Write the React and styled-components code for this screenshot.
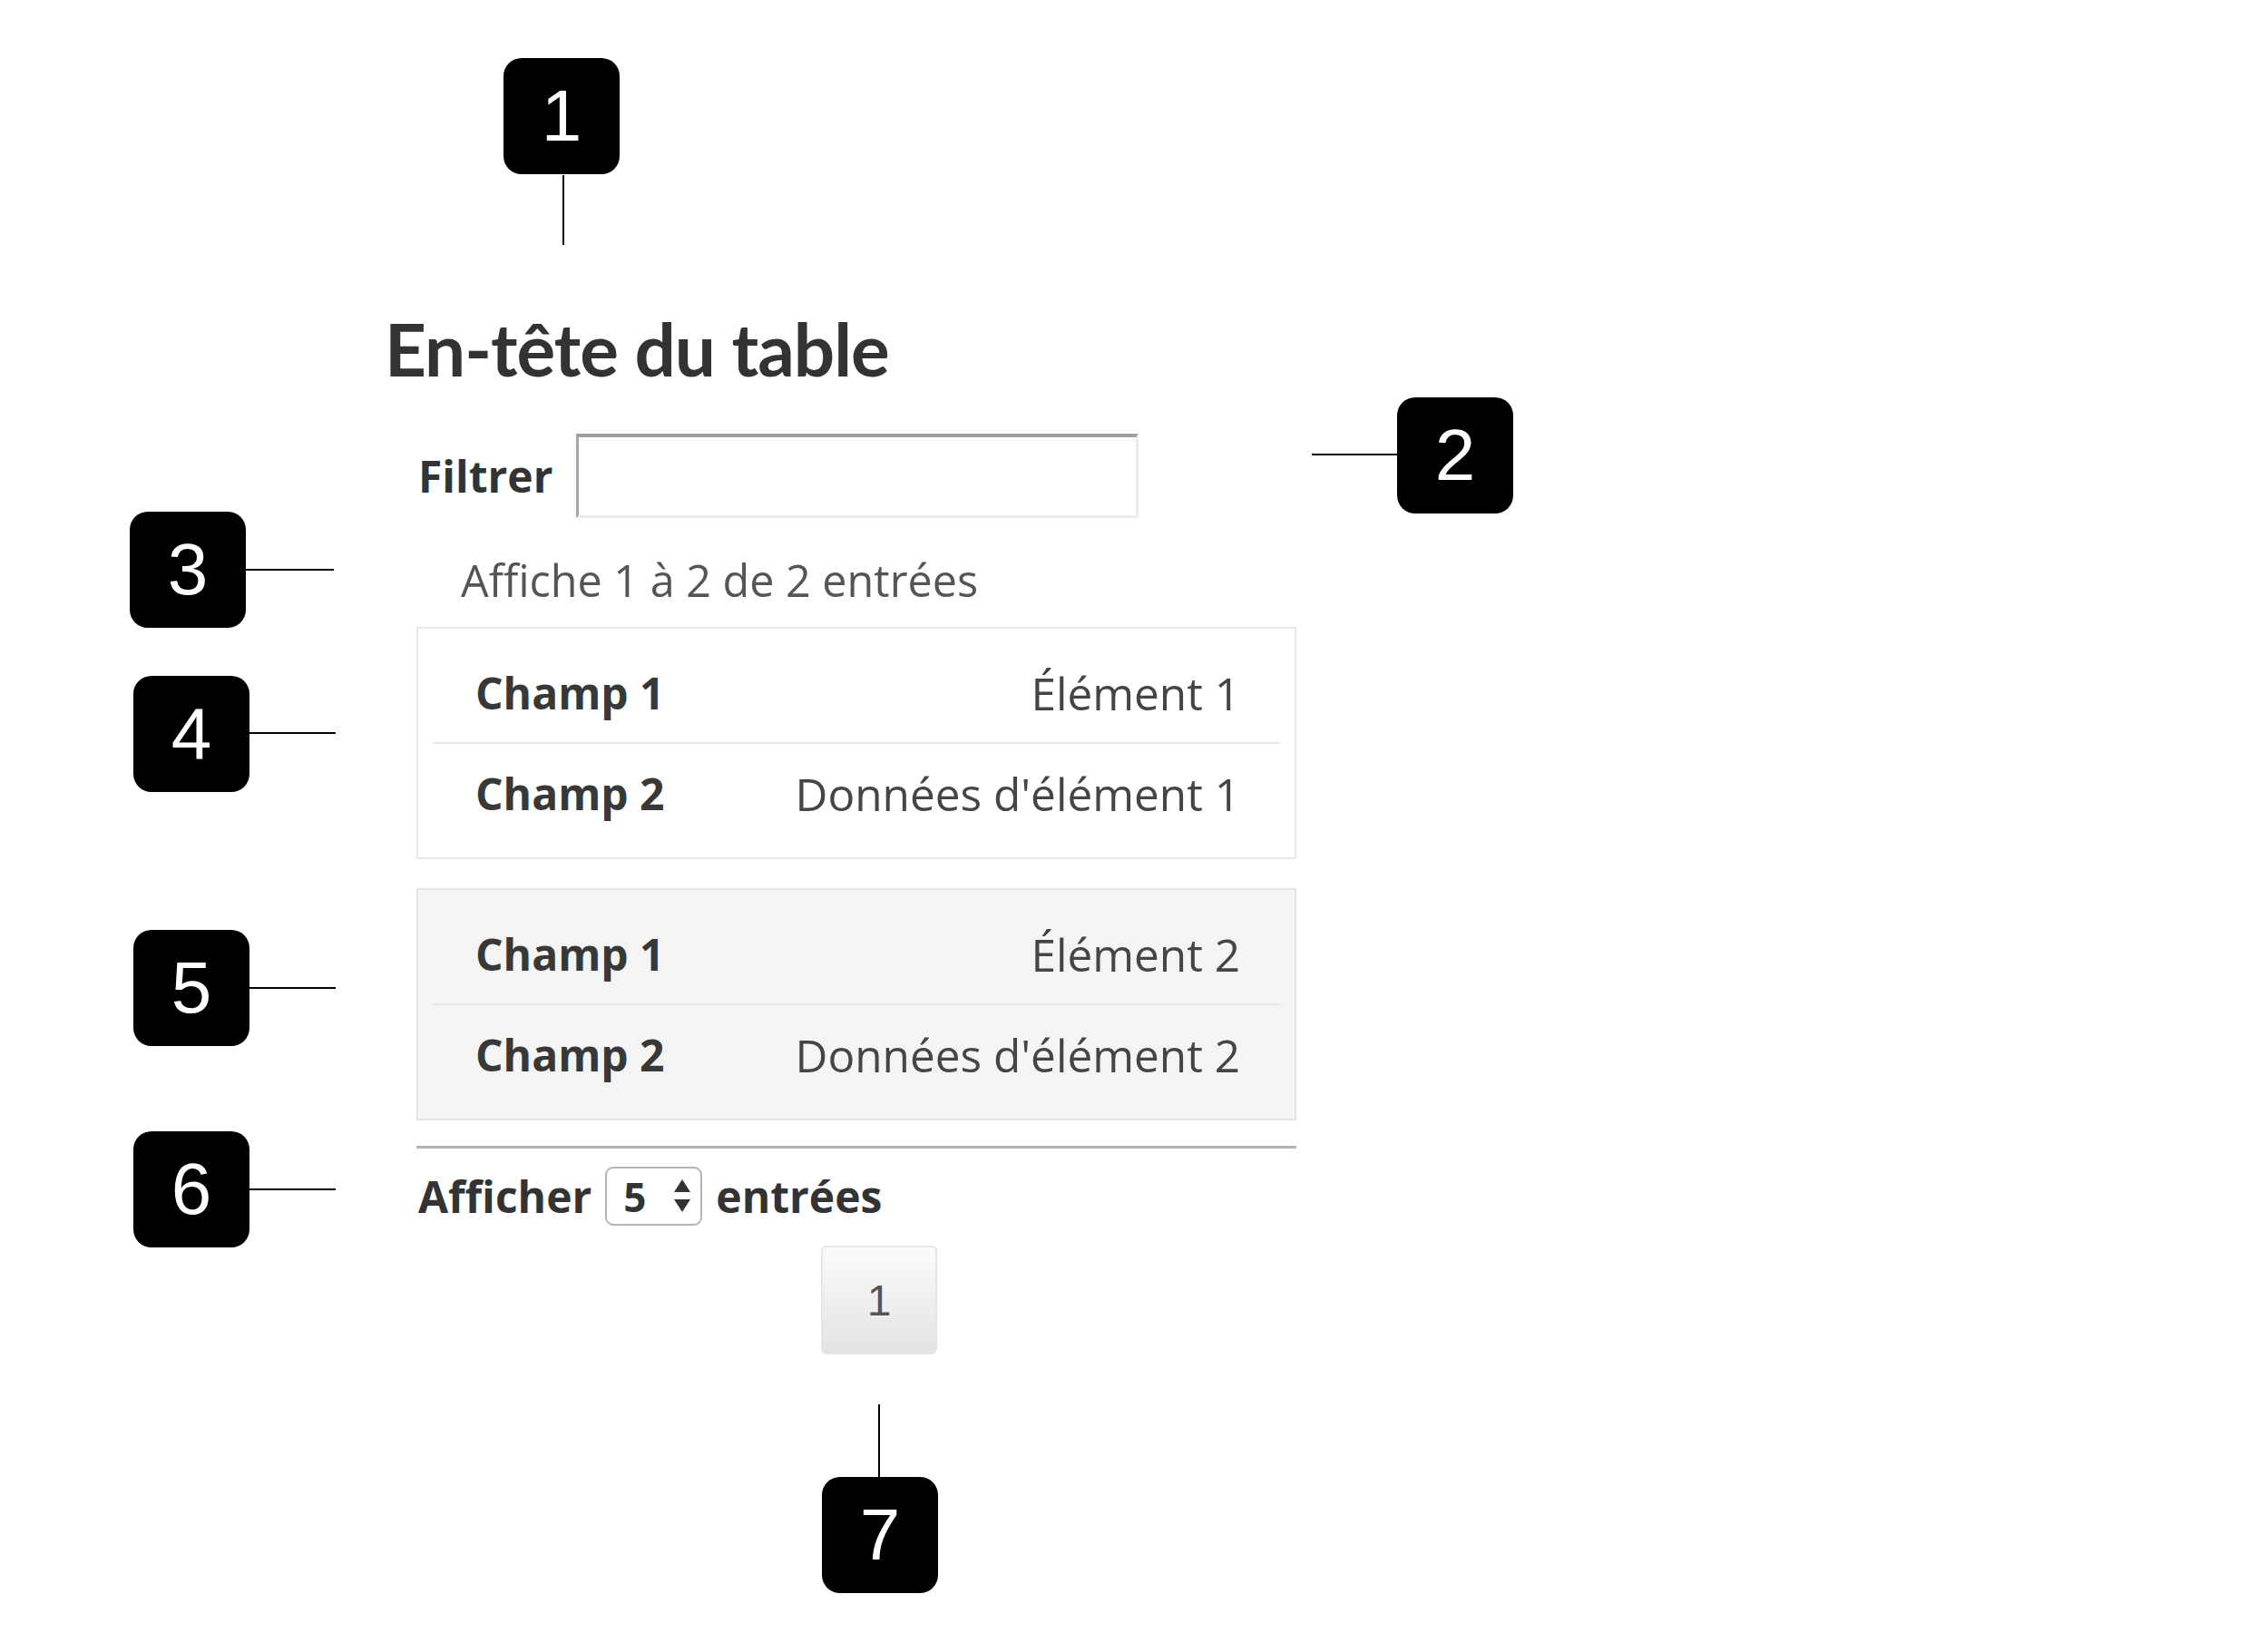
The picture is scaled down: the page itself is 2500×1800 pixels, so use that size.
import React from 'react';
import styled, { createGlobalStyle } from 'styled-components';

const GlobalStyle = createGlobalStyle`
	html, body {
		margin: 0;
		padding: 0;
		background: #ffffff;
	}
	body {
		font-family: "Open Sans", "Liberation Sans", sans-serif;
		color: #333;
	}
`;

const Page = styled.div`
	position: relative;
	width: 2500px;
	height: 1800px;
	overflow: hidden;
`;

const Main = styled.div`
	margin-left: 424px;
	padding-top: 344px;
	width: 1100px;
`;

const Title = styled.h1`
	margin: 0;
	font-family: Lato, "Open Sans", sans-serif;
	font-weight: 700;
	font-size: 80px;
	line-height: 80px;
	color: #333;
	letter-spacing: -1px;
`;

const FilterRow = styled.div`
	display: flex;
	align-items: center;
	gap: 26px;
	margin: 54px 0 0 37px;
`;

const Label = styled.label`
	font-weight: 700;
	font-size: 48px;
	color: #333;
	line-height: 60px;
`;

const FilterInput = styled.input`
	box-sizing: border-box;
	width: 620px;
	height: 93px;
	margin: 0;
	padding: 0 16px;
	background: #fff;
	border-top: 4px solid #9e9e9e;
	border-left: 3px solid #a8a8a8;
	border-right: 3px solid #ececec;
	border-bottom: 3px solid #ececec;
	outline: none;
	font-size: 44px;
`;

const Info = styled.div`
	margin: 38px 0 0 84px;
	font-size: 48.5px;
	line-height: 60px;
	font-weight: 400;
	color: #555;
`;

const Card = styled.div`
	box-sizing: border-box;
	width: 970px;
	margin: ${p => (p.first ? '22px' : '32px')} 0 0 35px;
	padding: 16px;
	background: ${p => (p.striped ? '#f4f4f4' : '#ffffff')};
	border: 2px solid ${p => (p.striped ? '#e3e3e3' : '#e8e8e8')};
`;

const Row = styled.div`
	display: flex;
	align-items: center;
	justify-content: space-between;
	height: 109px;
	padding: 0 44px 0 47px;
	border-bottom: ${p => (p.last ? 'none' : '2px solid #e6e6e6')};
	font-size: 48px;
`;

const FieldName = styled.span`
	font-weight: 700;
	color: #383838;
`;

const FieldValue = styled.span`
	font-weight: 400;
	font-size: 49.5px;
	color: #454545;
`;

const Rule = styled.div`
	width: 970px;
	height: 3px;
	margin: 28px 0 0 35px;
	background: #b3b3b3;
`;

const LengthRow = styled.div`
	display: flex;
	align-items: center;
	margin: 20px 0 0 37px;
	font-weight: 700;
	font-size: 48px;
	color: #333;
	gap: 15px;
`;

const SelectBox = styled.div`
	box-sizing: border-box;
	display: flex;
	align-items: center;
	justify-content: space-between;
	width: 107px;
	height: 65px;
	padding: 0 10px 0 18px;
	border: 2px solid #b4b4b4;
	border-radius: 9px;
	background: #fff;
	font-size: 44px;
	line-height: 1;
`;

const PageButton = styled.div`
	box-sizing: border-box;
	display: flex;
	align-items: center;
	justify-content: center;
	width: 128px;
	height: 120px;
	margin: 22px 0 0 481px;
	border: 2px solid #e6e6e6;
	border-radius: 6px;
	background: linear-gradient(#fbfbfb, #e3e3e3);
	font-family: "Liberation Sans", Arial, sans-serif;
	font-size: 48px;
	color: #555;
`;

const Callout = styled.div`
	position: absolute;
	left: ${p => p.x}px;
	top: ${p => p.y}px;
	width: 128px;
	height: 128px;
	border-radius: 20px;
	background: #000;
	color: #fff;
	display: flex;
	align-items: center;
	justify-content: center;
	font-family: "Liberation Sans", Arial, sans-serif;
	font-size: 80px;
	line-height: 1;
`;

const Leader = styled.div`
	position: absolute;
	left: ${p => p.x}px;
	top: ${p => p.y}px;
	width: ${p => (p.vertical ? 2 : p.len)}px;
	height: ${p => (p.vertical ? p.len : 2)}px;
	background: #000;
`;

const Arrows = () => (
	<svg width="20" height="38" viewBox="0 0 20 38">
		<polygon points="10,0 19,14 1,14" fill="#333" />
		<polygon points="1,22 19,22 10,36" fill="#333" />
	</svg>
);

const records = [
	{ value1: 'Élément 1', value2: "Données d'élément 1" },
	{ value1: 'Élément 2', value2: "Données d'élément 2" },
];

const callouts = [
	{ n: 1, x: 555, y: 64 },
	{ n: 2, x: 1540, y: 438 },
	{ n: 3, x: 143, y: 564 },
	{ n: 4, x: 147, y: 745 },
	{ n: 5, x: 147, y: 1025 },
	{ n: 6, x: 147, y: 1247 },
	{ n: 7, x: 906, y: 1628 },
];

const leaders = [
	{ x: 620, y: 193, len: 77, vertical: true },
	{ x: 1446, y: 500, len: 95 },
	{ x: 271, y: 627, len: 97 },
	{ x: 275, y: 807, len: 95 },
	{ x: 275, y: 1088, len: 95 },
	{ x: 275, y: 1310, len: 95 },
	{ x: 968, y: 1548, len: 80, vertical: true },
];

const App = () => {
	return (
		<Page>
			<GlobalStyle />
			<Main>
				<Title>En-tête du table</Title>
				<FilterRow>
					<Label htmlFor="filtre">Filtrer</Label>
					<FilterInput id="filtre" type="text" />
				</FilterRow>
				<Info>Affiche 1 à 2 de 2 entrées</Info>

				{records.map((rec, idx) => (
					<Card key={rec.value1} first={idx === 0} striped={idx % 2 === 1}>
						<Row>
							<FieldName>Champ 1</FieldName>
							<FieldValue>{rec.value1}</FieldValue>
						</Row>
						<Row last>
							<FieldName>Champ 2</FieldName>
							<FieldValue>{rec.value2}</FieldValue>
						</Row>
					</Card>
				))}

				<Rule />
				<LengthRow>
					<span>Afficher</span>
					<SelectBox>
						<span>5</span>
						<Arrows />
					</SelectBox>
					<span>entrées</span>
				</LengthRow>
				<PageButton>1</PageButton>
			</Main>

			{callouts.map(c => (
				<Callout key={c.n} x={c.x} y={c.y}>{c.n}</Callout>
			))}
			{leaders.map((l, idx) => (
				<Leader key={idx} {...l} />
			))}
		</Page>
	);
};

export default App;
